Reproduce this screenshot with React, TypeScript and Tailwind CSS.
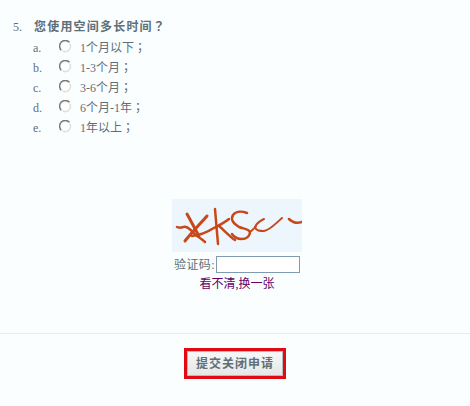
const FONT = "font-['Liberation_Serif','Noto_Sans_CJK_SC',serif]";

const options = [
  { key: 'a.', text: '1个月以下' },
  { key: 'b.', text: '1-3个月' },
  { key: 'c.', text: '3-6个月' },
  { key: 'd.', text: '6个月-1年' },
  { key: 'e.', text: '1年以上' },
];

function Radio() {
  return (
    <svg width="13" height="13" viewBox="0 0 13 13" className="mt-[-4px] shrink-0">
      <circle cx="6.5" cy="6.5" r="6" fill="#f4f4f0" />
      <path d="M2.2 10.2A5.6 5.6 0 0 1 10.5 2.2" fill="none" stroke="#777" strokeWidth="1.4" />
      <path d="M11 4A5.6 5.6 0 0 1 4 11.4" fill="none" stroke="#dcdcd6" strokeWidth="1.2" />
      <circle cx="6.5" cy="6.5" r="4" fill="#ffffff" />
    </svg>
  );
}

function Captcha() {
  return (
    <svg width="130" height="53" viewBox="0 0 130 53" className="block bg-[#edf6fd]">
      <g fill="none" stroke="#c8481a" strokeWidth="2.5" strokeLinecap="round" strokeLinejoin="round">
        <path d="M5 28C9 30 11 27 14 28C18 29 21 34 25 37C28 39 31 41 33 43" />
        <path d="M15 15C19 22 23 30 27 37" strokeWidth="3" />
        <path d="M13 42C20 33 28 25 35 17" strokeWidth="3" />
        <path d="M20 37C27 36 34 34 40 30C46 27 52 24 57 20" />
        <path d="M43 10C44 22 45 33 46 45" />
        <path d="M47 27C52 31 57 37 63 41" />
        <path d="M75 14C70 12 64 12 61 16C58 21 62 25 67 28C72 30 78 30 78 34C77 38 74 40 70 40C66 40 62 38 60 35" />
        <path d="M92 20C88 22 84 25 83 28C84 32 88 32 92 32C98 31 102 26 110 19" strokeWidth="2" />
        <path d="M78 33C80 31 82 30 84 27" strokeWidth="2" />
        <path d="M117 20C120 23 124 25 130 23" />
      </g>
    </svg>
  );
}

export default function App() {
  return (
    <div className={`${FONT} w-[470px] h-[406px] bg-[#fbfeff] text-[#5f6f77] text-[12px] leading-[20px] flex flex-col overflow-hidden`}>
      <div className="pl-[13px] pt-[17px] h-[37px] flex">
        <span className="w-[21px]">5.</span>
        <b className="font-bold tracking-[1.2px]">
          您使用空间多长时间<span className="font-['Noto_Sans_CJK_TC'] leading-none">？</span>
        </b>
      </div>
      <ul className="mt-[1px] pl-[33px]">
        {options.map((o) => (
          <li key={o.key} className="flex items-center h-[20px]">
            <span className="w-[26px]">{o.key}</span>
            <Radio />
            <span className="ml-[8px] h-[20px]">
              {o.text}
              <span className="font-['Noto_Sans_CJK_TC'] leading-none">；</span>
            </span>
          </li>
        ))}
      </ul>
      <div className="mt-[61px] flex flex-col items-center pl-[4px]">
        <Captcha />
        <div className="mt-[4px] flex items-center h-[17px]">
          <span className="mr-[1px] tracking-[0.4px]">验证码:</span>
          <input className="w-[84px] h-[17px] border border-[#7f9bb0] bg-white" />
        </div>
        <a className="mt-[2px] text-[#660066] leading-[18px]">看不清,换一张</a>
      </div>
      <div className="mt-[40px] border-t border-[#e6eced]" />
      <div className="mt-[14px] flex justify-center">
        <button className="w-[102px] h-[31px] border-[3px] border-[#e00a12] bg-[linear-gradient(#f8f8f8,#e4e6e6)] text-[12px] font-bold tracking-[1px] text-[#5f6f77] shadow-[inset_0_0_0_1px_#b4bcc0]">
          提交关闭申请
        </button>
      </div>
    </div>
  );
}
